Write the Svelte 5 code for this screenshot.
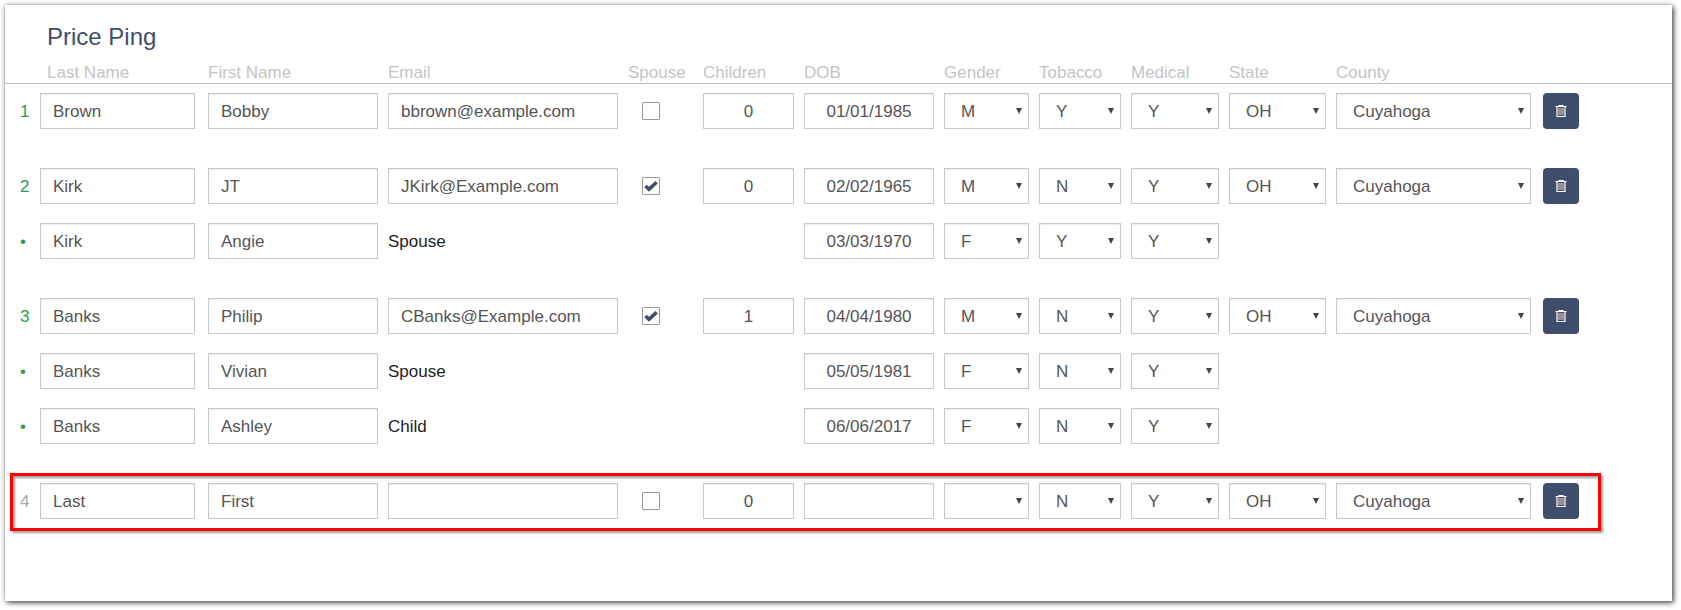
<script>
  const columns = [
    { key: 'num', label: '' },
    { key: 'last', label: 'Last Name' },
    { key: 'first', label: 'First Name' },
    { key: 'email', label: 'Email' },
    { key: 'spouse', label: 'Spouse' },
    { key: 'children', label: 'Children' },
    { key: 'dob', label: 'DOB' },
    { key: 'gender', label: 'Gender' },
    { key: 'tobacco', label: 'Tobacco' },
    { key: 'medical', label: 'Medical' },
    { key: 'state', label: 'State' },
    { key: 'county', label: 'County' },
    { key: 'actions', label: '' }
  ];

  const options = {
    gender: ['', 'M', 'F'],
    tobacco: ['Y', 'N'],
    medical: ['Y', 'N'],
    state: ['OH', 'KY', 'MI'],
    county: ['Cuyahoga', 'Franklin', 'Summit']
  };

  let employees = $state([
    { last: 'Brown', first: 'Bobby', email: 'bbrown@example.com', spouse: false, children: '0', dob: '01/01/1985', gender: 'M', tobacco: 'Y', medical: 'Y', state: 'OH', county: 'Cuyahoga', dependents: [] },
    {
      last: 'Kirk', first: 'JT', email: 'JKirk@Example.com', spouse: true, children: '0', dob: '02/02/1965', gender: 'M', tobacco: 'N', medical: 'Y', state: 'OH', county: 'Cuyahoga',
      dependents: [
        { last: 'Kirk', first: 'Angie', relation: 'Spouse', dob: '03/03/1970', gender: 'F', tobacco: 'Y', medical: 'Y' }
      ]
    },
    {
      last: 'Banks', first: 'Philip', email: 'CBanks@Example.com', spouse: true, children: '1', dob: '04/04/1980', gender: 'M', tobacco: 'N', medical: 'Y', state: 'OH', county: 'Cuyahoga',
      dependents: [
        { last: 'Banks', first: 'Vivian', relation: 'Spouse', dob: '05/05/1981', gender: 'F', tobacco: 'N', medical: 'Y' },
        { last: 'Banks', first: 'Ashley', relation: 'Child', dob: '06/06/2017', gender: 'F', tobacco: 'N', medical: 'Y' }
      ]
    },
    { last: '', first: '', email: '', spouse: false, children: '0', dob: '', gender: '', tobacco: 'N', medical: 'Y', state: 'OH', county: 'Cuyahoga', isNew: true, dependents: [] }
  ]);

  const remove = (index) => { employees.splice(index, 1); };
</script>

{#snippet text(person, key, label, placeholder = '')}
  <td class={key}><input type="text" aria-label={label} {placeholder} bind:value={person[key]} /></td>
{/snippet}

{#snippet choice(person, key, label)}
  <td class={key}>
    <div class="select">
      <select aria-label={label} bind:value={person[key]}>
        {#each options[key] as option}
          <option value={option}>{option}</option>
        {/each}
      </select>
    </div>
  </td>
{/snippet}

<main class="panel">
  <h1>Price Ping</h1>
  <table>
    <colgroup>
      {#each columns as column}
        <col class="col-{column.key}" />
      {/each}
    </colgroup>
    <thead>
      <tr>
        {#each columns as column}
          <th class={column.key} scope="col">{column.label}</th>
        {/each}
      </tr>
    </thead>
    {#each employees as person, i}
      <tbody>
        <tr class:highlight={person.isNew}>
          <td class="num" class:muted={person.isNew}>
            {i + 1}
            {#if person.isNew}<span class="frame"></span>{/if}
          </td>
          {@render text(person, 'last', 'Last Name', 'Last')}
          {@render text(person, 'first', 'First Name', 'First')}
          {@render text(person, 'email', 'Email')}
          <td class="spouse">
            <label class="check">
              <input type="checkbox" aria-label="Spouse" bind:checked={person.spouse} />
              <svg viewBox="0 0 14 12" aria-hidden="true"><path d="M1.4 6 5 9.2 12.6 2.2" /></svg>
            </label>
          </td>
          {@render text(person, 'children', 'Children')}
          {@render text(person, 'dob', 'DOB')}
          {@render choice(person, 'gender', 'Gender')}
          {@render choice(person, 'tobacco', 'Tobacco')}
          {@render choice(person, 'medical', 'Medical')}
          {@render choice(person, 'state', 'State')}
          {@render choice(person, 'county', 'County')}
          <td class="actions">
            <button type="button" aria-label="Delete row" onclick={() => remove(i)}>
              <svg viewBox="0 0 12 12" aria-hidden="true">
                <path d="M.5 1.5h11M4 1.5v-1h4v1M2 2v9.5h8V2" />
                <path class="slats" d="M4 3v7M6 3v7M8 3v7" />
              </svg>
            </button>
          </td>
        </tr>
        {#each person.dependents as dependent}
          <tr>
            <td class="num">•</td>
            {@render text(dependent, 'last', 'Last Name')}
            {@render text(dependent, 'first', 'First Name')}
            <td class="relation" colspan="3">{dependent.relation}</td>
            {@render text(dependent, 'dob', 'DOB')}
            {@render choice(dependent, 'gender', 'Gender')}
            {@render choice(dependent, 'tobacco', 'Tobacco')}
            {@render choice(dependent, 'medical', 'Medical')}
            <td colspan="3"></td>
          </tr>
        {/each}
      </tbody>
    {/each}
  </table>
</main>

<style>
  :global(body) { background: #fff; font-family: "Liberation Sans", Arial, sans-serif; font-size: 17px; color: #222; }

  .panel { box-sizing: border-box; margin: 5px 9px 9px 5px; padding: 18px 0 72px; background: #fff; box-shadow: 0 0 5px rgba(0, 0, 0, 0.3), 2px 2px 5px rgba(0, 0, 0, 0.6); }
  h1 { margin: 0 0 9px; padding-left: 42px; font-size: 24px; line-height: 28px; font-weight: 400; color: #3f4e6d; }

  table { width: 100%; table-layout: fixed; border-collapse: separate; border-spacing: 0; }
  .col-num { width: 35px; }
  .col-last { width: 168px; }
  .col-first { width: 180px; }
  .col-email { width: 240px; }
  .col-spouse { width: 75px; }
  .col-children { width: 101px; }
  .col-dob { width: 140px; }
  .col-gender { width: 95px; }
  .col-tobacco { width: 92px; }
  .col-medical { width: 98px; }
  .col-state { width: 107px; }
  .col-county { width: 207px; }

  th { padding: 2px 0 0; border-bottom: 1px solid #bbb; font-weight: 400; line-height: 21px; text-align: left; white-space: nowrap; color: #c4c4c4; }
  th.last { padding-left: 7px; }

  td { height: 36px; padding: 9px 10px 10px 0; vertical-align: middle; }
  td.num, td.relation { padding-bottom: 8px; }
  tbody + tbody tr:first-child td { padding-top: 29px; }
  td.last { padding-right: 13px; }
  td.county { padding-right: 12px; }
  td.num { padding-left: 15px; padding-right: 0; color: #2e9952; }
  td.num.muted { color: #aaa; }
  td.spouse { padding-left: 14px; }

  input[type="text"], select { display: block; box-sizing: border-box; width: 100%; height: 36px; margin: 0; padding: 2px 12px 0; border: 1px solid #c8c8c8; border-radius: 0; background: #fff; box-shadow: inset 0 1px 1px rgba(0, 0, 0, 0.08); font: inherit; color: #555; }
  input::placeholder { color: #555; opacity: 1; }
  .children input[type="text"], .dob input[type="text"] { text-align: center; }

  .select { position: relative; }
  .select select { appearance: none; padding: 0 16px; }
  .select::after { content: ''; position: absolute; top: 15px; right: 7px; border: 3px solid transparent; border-top: 6px solid #444; border-bottom: 0; pointer-events: none; }

  .check { position: relative; display: block; width: 18px; height: 18px; }
  .check input { appearance: none; display: block; box-sizing: border-box; width: 18px; height: 18px; margin: 0; border: 1px solid #999; border-radius: 1px; background: #fff; }
  .check svg { position: absolute; top: 3px; left: 2px; width: 14px; height: 12px; fill: none; stroke: #3f4e6d; stroke-width: 3.6; visibility: hidden; }
  .check input:checked + svg { visibility: visible; }

  button { display: flex; align-items: center; justify-content: center; width: 36px; height: 36px; padding: 0; border: 0; border-radius: 4px; background: #3f4e6d; cursor: pointer; }
  button svg { width: 12px; height: 12px; fill: none; stroke: #fff; stroke-width: 1.2; }
  button .slats { stroke: #d5b9b4; }

  .highlight { position: relative; }
  .frame { position: absolute; top: 19px; right: 71px; bottom: -2px; left: 5px; border: 3px solid #f00; filter: drop-shadow(2px 2px 1px rgba(0, 0, 0, 0.4)); pointer-events: none; }
</style>
